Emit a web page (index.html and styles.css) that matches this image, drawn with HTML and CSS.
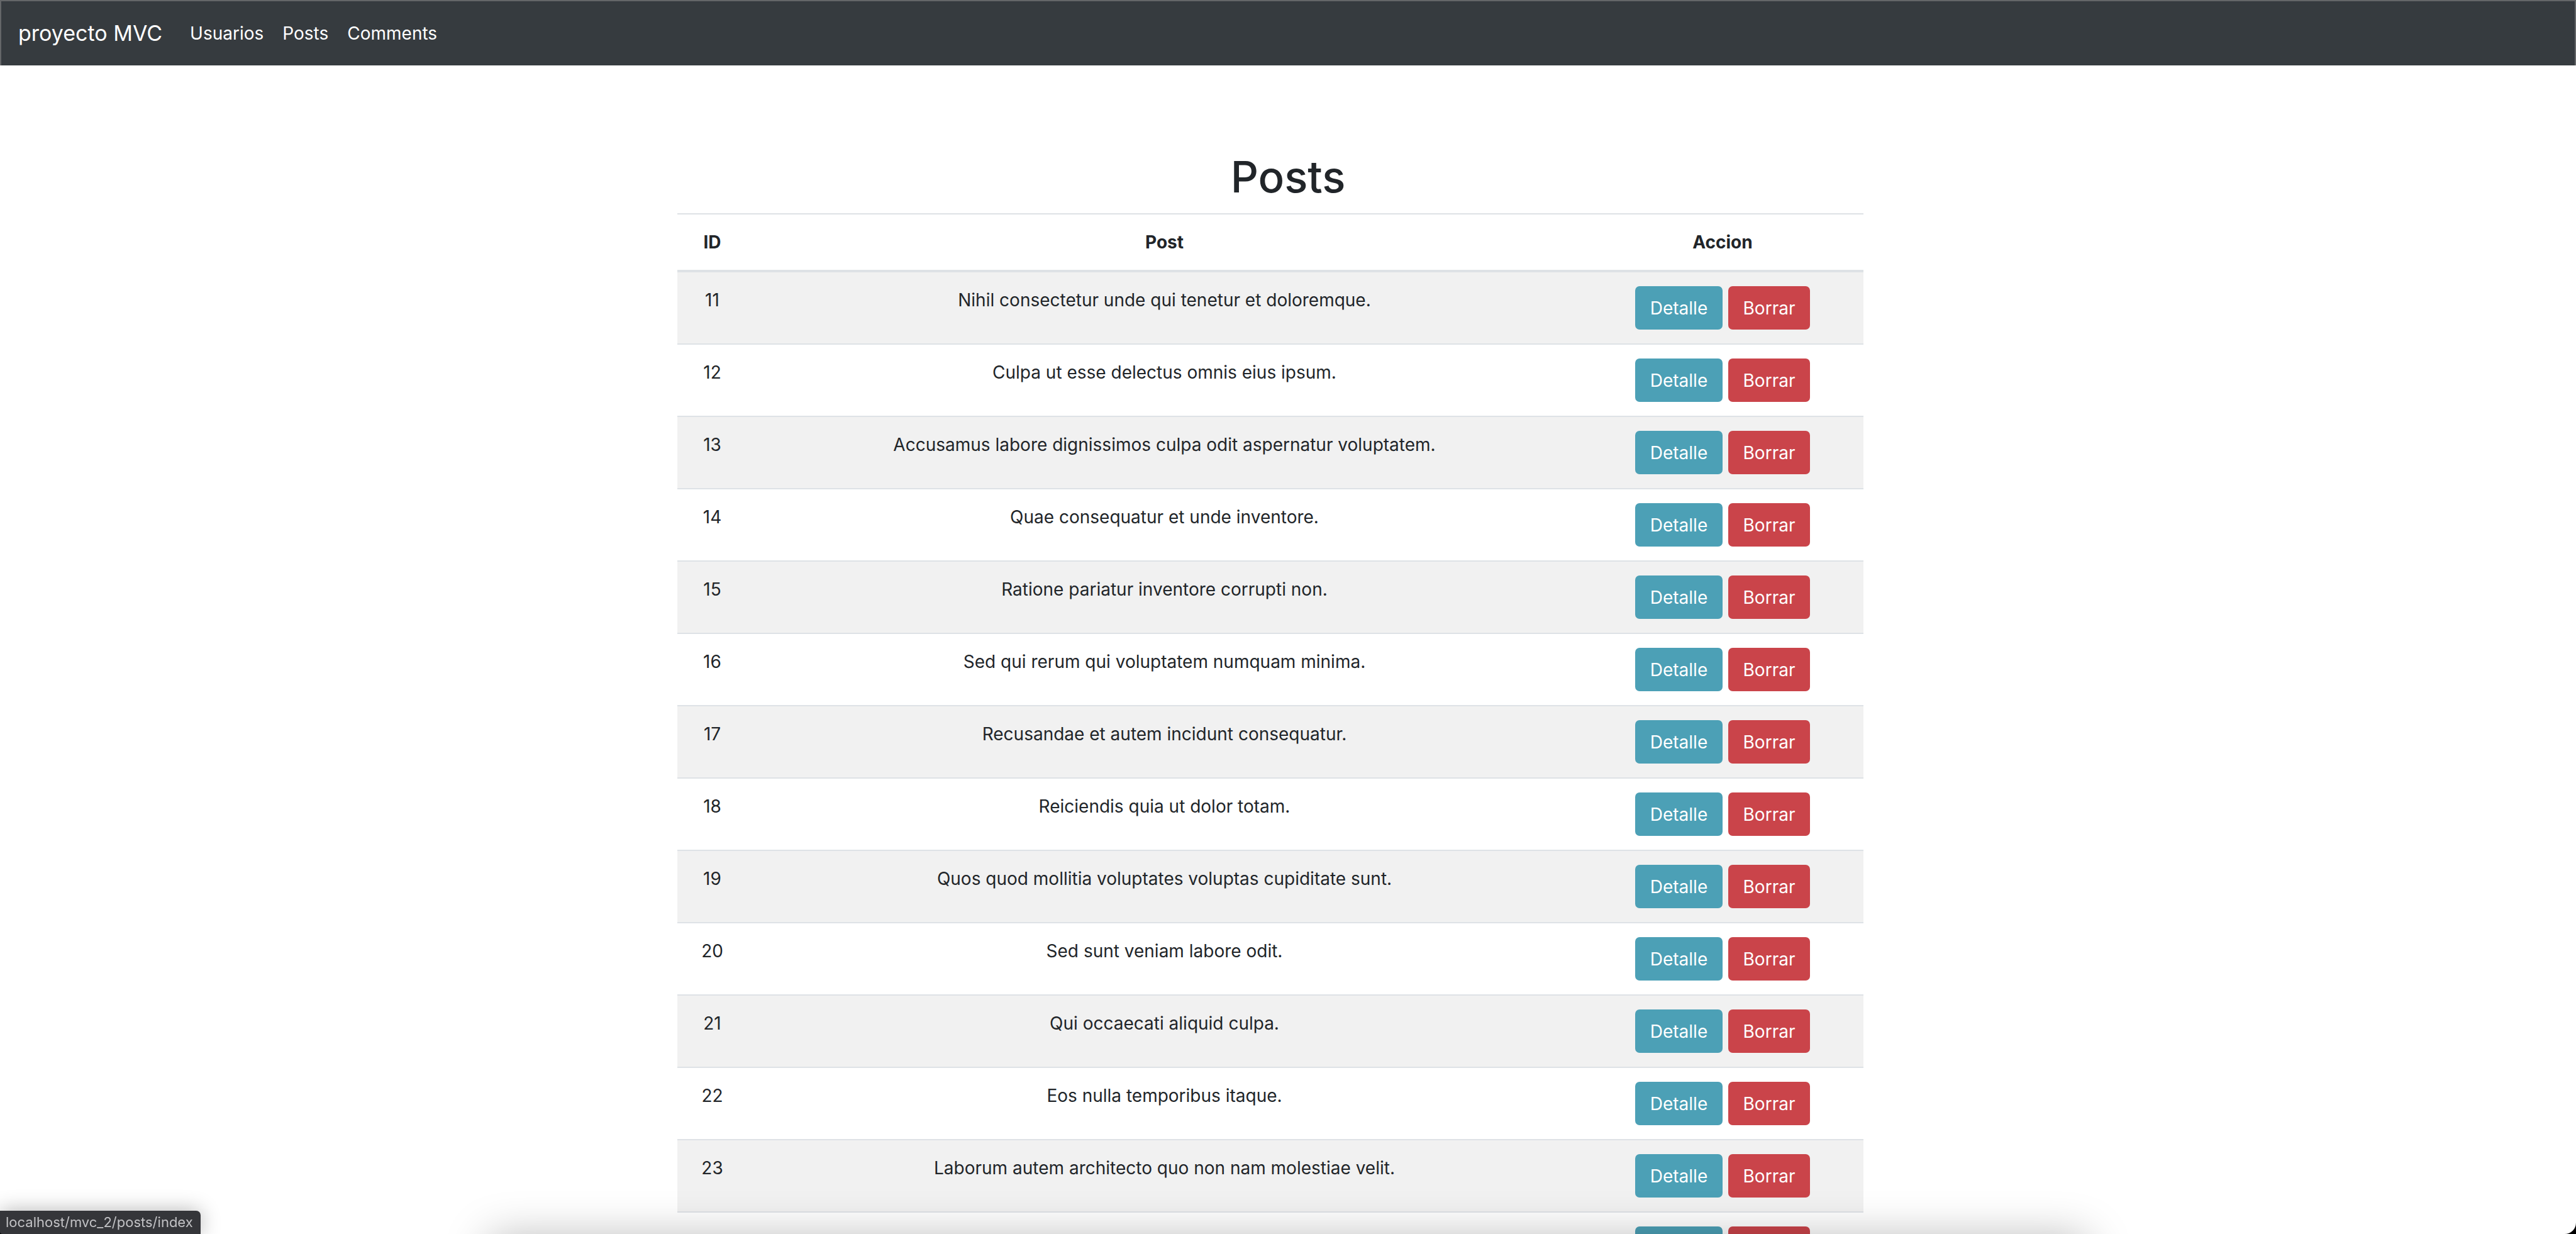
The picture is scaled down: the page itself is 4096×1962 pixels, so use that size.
FILE: index.html
```html
<!DOCTYPE html>
<html lang="es">
<head>
<meta charset="utf-8">
<title>proyecto MVC</title>
<link rel="stylesheet" href="styles.css">
</head>
<body>
<nav class="navbar">
  <a class="brand" href="#">proyecto MVC</a>
  <a class="nav-link" href="#">Usuarios</a>
  <a class="nav-link" href="#">Posts</a>
  <a class="nav-link" href="#">Comments</a>
</nav>
<main class="container">
  <h1 class="title">Posts</h1>
  <div class="table-wrap">
    <table class="table">
      <thead>
        <tr><th class="col-id" scope="col">ID</th><th scope="col">Post</th><th class="col-action" scope="col">Accion</th></tr>
      </thead>
      <tbody>
        <tr><td>11</td><td>Nihil consectetur unde qui tenetur et doloremque.</td><td><div class="actions"><button class="btn btn-info">Detalle</button><button class="btn btn-danger">Borrar</button></div></td></tr>
        <tr><td>12</td><td>Culpa ut esse delectus omnis eius ipsum.</td><td><div class="actions"><button class="btn btn-info">Detalle</button><button class="btn btn-danger">Borrar</button></div></td></tr>
        <tr><td>13</td><td>Accusamus labore dignissimos culpa odit aspernatur voluptatem.</td><td><div class="actions"><button class="btn btn-info">Detalle</button><button class="btn btn-danger">Borrar</button></div></td></tr>
        <tr><td>14</td><td>Quae consequatur et unde inventore.</td><td><div class="actions"><button class="btn btn-info">Detalle</button><button class="btn btn-danger">Borrar</button></div></td></tr>
        <tr><td>15</td><td>Ratione pariatur inventore corrupti non.</td><td><div class="actions"><button class="btn btn-info">Detalle</button><button class="btn btn-danger">Borrar</button></div></td></tr>
        <tr><td>16</td><td>Sed qui rerum qui voluptatem numquam minima.</td><td><div class="actions"><button class="btn btn-info">Detalle</button><button class="btn btn-danger">Borrar</button></div></td></tr>
        <tr><td>17</td><td>Recusandae et autem incidunt consequatur.</td><td><div class="actions"><button class="btn btn-info">Detalle</button><button class="btn btn-danger">Borrar</button></div></td></tr>
        <tr><td>18</td><td>Reiciendis quia ut dolor totam.</td><td><div class="actions"><button class="btn btn-info">Detalle</button><button class="btn btn-danger">Borrar</button></div></td></tr>
        <tr><td>19</td><td>Quos quod mollitia voluptates voluptas cupiditate sunt.</td><td><div class="actions"><button class="btn btn-info">Detalle</button><button class="btn btn-danger">Borrar</button></div></td></tr>
        <tr><td>20</td><td>Sed sunt veniam labore odit.</td><td><div class="actions"><button class="btn btn-info">Detalle</button><button class="btn btn-danger">Borrar</button></div></td></tr>
        <tr><td>21</td><td>Qui occaecati aliquid culpa.</td><td><div class="actions"><button class="btn btn-info">Detalle</button><button class="btn btn-danger">Borrar</button></div></td></tr>
        <tr><td>22</td><td>Eos nulla temporibus itaque.</td><td><div class="actions"><button class="btn btn-info">Detalle</button><button class="btn btn-danger">Borrar</button></div></td></tr>
        <tr><td>23</td><td>Laborum autem architecto quo non nam molestiae velit.</td><td><div class="actions"><button class="btn btn-info">Detalle</button><button class="btn btn-danger">Borrar</button></div></td></tr>
        <tr><td></td><td></td><td><div class="actions"><button class="btn btn-info" aria-label="Detalle"></button><button class="btn btn-danger" aria-label="Borrar"></button></div></td></tr>
      </tbody>
    </table>
  </div>
</main>
<div class="dock-shadow"></div>
<div class="window-edge"></div>
<div class="status">localhost/mvc_2/posts/index</div>
</body>
</html>
```
FILE: styles.css
```css
* { box-sizing: border-box; }

body {
  margin: 0;
  height: 100vh;
  overflow: hidden;
  background: #fff;
  color: #212529;
  font: 400 28px/44px Inter, "Liberation Sans", sans-serif;
}

.navbar {
  display: flex;
  align-items: center;
  height: 104px;
  padding: 0 27px;
  background: #363b3f;
  border: 2px solid #646668;
  border-bottom: 0;
}
.brand, .nav-link { color: #fff; text-decoration: none; }
.brand { font-size: 34px; margin-right: 29px; }
.nav-link { padding: 0 15px; }

.container {
  max-width: 2084px;
  margin: 0 auto;
  padding-top: 133px;
}
.title {
  margin: 0 0 14px;
  font-size: 69px;
  line-height: 88px;
  font-weight: 500;
  text-align: center;
}

.table-wrap { padding: 0 127px 0 71px; }
.table {
  width: 100%;
  table-layout: fixed;
  border-collapse: separate;
  border-spacing: 0;
  text-align: center;
}
.col-id { width: 111px; }
.col-action { width: 448px; }
.table th, .table td {
  padding: 22px 0;
  border-top: 2px solid #dee2e6;
  vertical-align: top;
}
.table th { font-weight: 700; border-bottom: 4px solid #dee2e6; }
.table tbody tr:first-child td { border-top: 0; }
.table tbody tr:nth-child(odd) td { background: #f1f1f1; }

.actions { display: flex; justify-content: center; gap: 9px; }
.btn {
  height: 69px;
  padding: 0 20px;
  border: 0;
  border-radius: 7px;
  color: #fff;
  font: inherit;
}
.btn-info { width: 139px; background: #4ca0b6; }
.btn-danger { width: 130px; background: #ca444a; }

.dock-shadow {
  position: fixed;
  left: 19%;
  right: 19%;
  top: calc(100% + 5px);
  height: 100px;
  box-shadow: 0 0 70px rgba(0, 0, 0, 0.28);
}
.window-edge {
  position: fixed;
  inset: 0;
  border-radius: 0 0 18px 18px;
  box-shadow: 0 0 0 20px #000;
  pointer-events: none;
}
.status {
  position: fixed;
  left: 0;
  bottom: 0;
  padding: 0 12px 0 9px;
  background: #35363a;
  color: #c1c1c4;
  font-size: 22px;
  line-height: 37px;
  border-radius: 0 7px 0 4px;
  box-shadow: 0 0 32px rgba(0, 0, 0, 0.3);
}
```
